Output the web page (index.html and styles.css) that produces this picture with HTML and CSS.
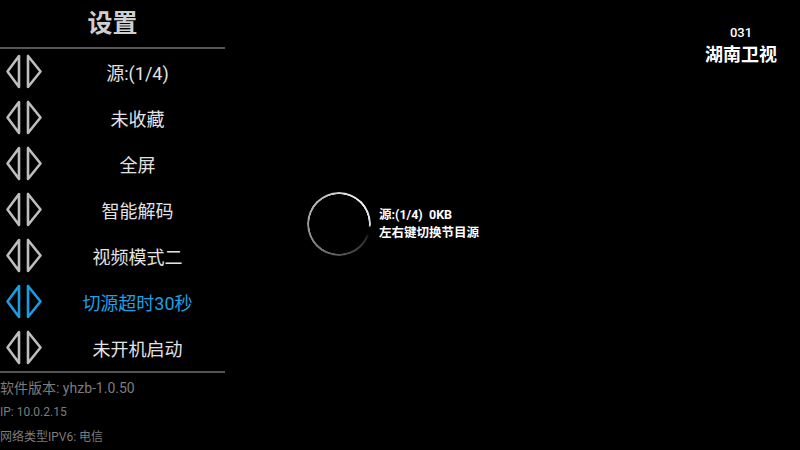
FILE: index.html
```html
<!DOCTYPE html>
<html lang="zh-CN">
<head>
    <meta charset="UTF-8">
    <title>设置</title>
    <link rel="stylesheet" href="styles.css">
</head>
<body>
    <div class="stage">
        <div class="loading">
            <div class="spinner"></div>
            <div class="loading-text">
                <div class="speed">源:(1/4)  0KB</div>
                <div>左右键切换节目源</div>
            </div>
        </div>

        <div class="channel">
            <div class="channel-num">031</div>
            <div class="channel-name">湖南卫视</div>
        </div>

        <div class="menu">
            <div class="menu-title">设置</div>
            <ul class="menu-list">
                <li class="menu-item">
                    <svg class="arrows" viewBox="0 0 50 46"><path d="M19 7 L19 38 L7.5 22.5 Z M28 7 L28 38 L40.5 22.5 Z"/></svg>
                    <span class="label">源:(1/4)</span>
                </li>
                <li class="menu-item">
                    <svg class="arrows" viewBox="0 0 50 46"><path d="M19 7 L19 38 L7.5 22.5 Z M28 7 L28 38 L40.5 22.5 Z"/></svg>
                    <span class="label">未收藏</span>
                </li>
                <li class="menu-item">
                    <svg class="arrows" viewBox="0 0 50 46"><path d="M19 7 L19 38 L7.5 22.5 Z M28 7 L28 38 L40.5 22.5 Z"/></svg>
                    <span class="label">全屏</span>
                </li>
                <li class="menu-item">
                    <svg class="arrows" viewBox="0 0 50 46"><path d="M19 7 L19 38 L7.5 22.5 Z M28 7 L28 38 L40.5 22.5 Z"/></svg>
                    <span class="label">智能解码</span>
                </li>
                <li class="menu-item">
                    <svg class="arrows" viewBox="0 0 50 46"><path d="M19 7 L19 38 L7.5 22.5 Z M28 7 L28 38 L40.5 22.5 Z"/></svg>
                    <span class="label">视频模式二</span>
                </li>
                <li class="menu-item active">
                    <svg class="arrows" viewBox="0 0 50 46"><path d="M19 7 L19 38 L7.5 22.5 Z M28 7 L28 38 L40.5 22.5 Z"/></svg>
                    <span class="label">切源超时30秒</span>
                </li>
                <li class="menu-item">
                    <svg class="arrows" viewBox="0 0 50 46"><path d="M19 7 L19 38 L7.5 22.5 Z M28 7 L28 38 L40.5 22.5 Z"/></svg>
                    <span class="label">未开机启动</span>
                </li>
            </ul>
            <div class="info">
                <div class="version">软件版本: yhzb-1.0.50</div>
                <div class="info-line">IP: 10.0.2.15</div>
                <div class="info-line">网络类型IPV6: 电信</div>
            </div>
        </div>
    </div>
</body>
</html>
```

FILE: styles.css
```css
html, body {
    margin: 0;
    padding: 0;
    background-color: #000;
}
body {
    font-family: Roboto, "Noto Sans CJK SC", sans-serif;
    color: #e0e0e0;
}
.stage {
    display: grid;
    width: 800px;
    height: 450px;
    overflow: hidden;
}
.stage > * {
    grid-area: 1 / 1;
}

/* loading indicator over the video */
.loading {
    display: flex;
    align-items: center;
    justify-content: center;
    gap: 8px;
    padding: 0 14px 2px 0;
}
.spinner {
    width: 64px;
    height: 64px;
    border-radius: 50%;
    background: conic-gradient(from 108deg, rgba(255,255,255,0) 0deg, #2a2a2a 8deg, #9a9a9a 160deg, #f0f0f0 300deg, #d8d8d8 345deg, rgba(255,255,255,0) 348deg);
    -webkit-mask: radial-gradient(farthest-side, transparent calc(100% - 2.5px), #000 calc(100% - 2px));
    mask: radial-gradient(farthest-side, transparent calc(100% - 2.5px), #000 calc(100% - 2px));
}
.loading-text {
    font-size: 12.5px;
    font-weight: bold;
    line-height: 18px;
    color: #fff;
}
.speed {
    white-space: pre;
}

/* channel label */
.channel {
    justify-self: end;
    align-self: start;
    padding: 23px 23px 0 0;
    text-align: center;
    color: #fff;
}
.channel-num {
    font-size: 13px;
    font-weight: 500;
    line-height: 19px;
}
.channel-name {
    font-size: 18px;
    font-weight: bold;
    line-height: 26px;
}

/* settings menu */
.menu {
    width: 225px;
    align-self: start;
}
.menu-title {
    height: 47px;
    line-height: 47px;
    text-align: center;
    font-size: 25px;
    font-weight: bold;
    color: #cfcfcf;
    border-bottom: 2px solid #555;
}
.menu-list {
    list-style: none;
    margin: 0;
    padding: 0;
    border-bottom: 2px solid #555;
}
.menu-item {
    display: flex;
    align-items: center;
    height: 46px;
}
.arrows {
    width: 50px;
    height: 46px;
    flex-shrink: 0;
    fill: none;
    stroke: #bdbdbd;
    stroke-width: 2.6;
    stroke-linejoin: round;
}
.label {
    flex: 1;
    text-align: center;
    font-size: 18px;
    color: #e2e2e2;
}
.menu-item.active .arrows {
    stroke: #1a9be2;
}
.menu-item.active .label {
    color: #1e9fe6;
}
.info {
    color: #7c7c7c;
    padding-top: 3px;
}
.version {
    font-size: 14px;
    line-height: 24px;
}
.info-line {
    font-size: 12px;
    line-height: 25px;
}
```
